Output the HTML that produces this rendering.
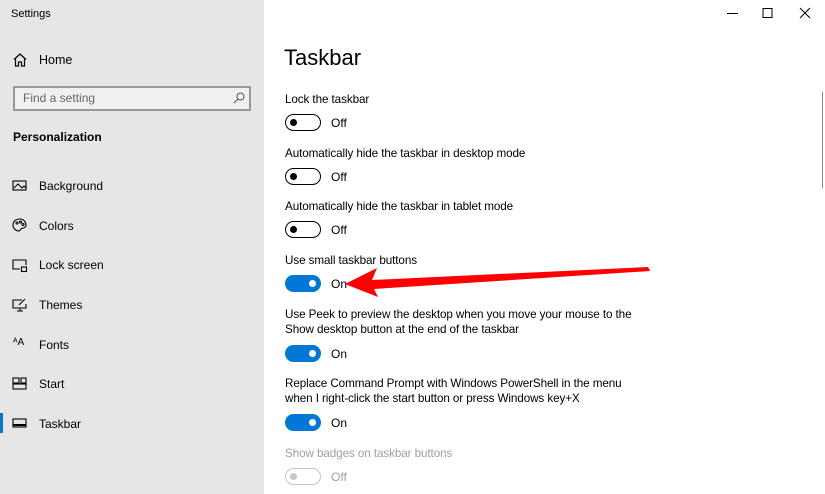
<!DOCTYPE html>
<html><head><style>
*{margin:0;padding:0;box-sizing:border-box}
body{width:825px;height:494px;overflow:hidden;background:#fff;font-family:"Liberation Sans",sans-serif;color:#000;position:relative}
.side{position:absolute;left:0;top:0;width:264px;height:494px;background:#e6e6e6}
.a{position:absolute;white-space:nowrap}
.nav{font-size:12px;left:39px}
.ic{position:absolute;left:12px}
.lbl{position:absolute;left:285px;font-size:11.7px;line-height:15px;letter-spacing:-0.1px}
.tg{position:absolute;left:285px;width:36px;height:17px;border-radius:9px}
.off{border:1.6px solid #000;background:#fff}
.off::after{content:"";position:absolute;left:4px;top:3.5px;width:7px;height:7px;border-radius:50%;background:#000}
.on{background:#0078d7}
.on::after{content:"";position:absolute;right:5px;top:5px;width:7px;height:7px;border-radius:50%;background:#fff}
.dis{border:1.6px solid #c6c6c6}
.dis::after{content:"";position:absolute;left:4px;top:3.5px;width:7px;height:7px;border-radius:50%;background:#c6c6c6}
.st{position:absolute;left:331px;font-size:12px}
</style></head><body>
<div class="side"></div>
<div class="a" style="left:11px;top:8px;font-size:11px">Settings</div>
<svg class="ic" style="top:53px" width="16" height="14" viewBox="0 0 16 14" fill="none" stroke="#000" stroke-width="1.2"><path d="M2 6.5L8 1l6 5.5M3.5 5.5V13h3V9h3v4h3V5.5"/></svg>
<div class="a nav" style="top:53px;font-size:12.5px">Home</div>
<div class="a" style="left:13px;top:86px;width:238px;height:25px;border:2px solid #999;background:#f0f0f0"></div>
<div class="a" style="left:23px;top:91px;font-size:12px;color:#666">Find a setting</div>
<svg class="a" style="left:233px;top:92px" width="12" height="12" viewBox="0 0 12 12" fill="none" stroke="#555" stroke-width="1"><circle cx="7.5" cy="4.5" r="3.5"/><path d="M5 7L1 11"/></svg>
<div class="a" style="left:13px;top:130px;font-size:12px;font-weight:bold">Personalization</div>

<svg class="ic" style="top:180px" width="16" height="12" fill="none" stroke="#000" stroke-width="1.1"><rect x="1" y="1" width="13" height="9"/><path d="M2 8l4-4 4 4 2-2 2 2"/></svg>
<div class="a nav" style="top:179px">Background</div>
<svg class="ic" style="top:218px" width="16" height="14" fill="none" stroke="#000" stroke-width="1.1"><path d="M8 1C4 1 1 3.5 1 7s3 6 6 6c1.5 0 1-2 2.5-2.5S14 10 14 7 11.5 1 8 1z"/><circle cx="5" cy="5" r="1"/><circle cx="8.5" cy="4" r="1"/><circle cx="11" cy="6.5" r="1"/></svg>
<div class="a nav" style="top:219px">Colors</div>
<svg class="ic" style="top:259px" width="16" height="14" fill="none" stroke="#000" stroke-width="1.1"><path d="M8 10H1V1h13v5"/><rect x="9.5" y="8" width="5" height="4.5"/></svg>
<div class="a nav" style="top:258px">Lock screen</div>
<svg class="ic" style="top:298px" width="16" height="14" fill="none" stroke="#000" stroke-width="1.1"><path d="M10 2H1v8h13V6M5 13h6M8 10v3M7 7l6-6"/></svg>
<div class="a nav" style="top:298px">Themes</div>
<div class="a" style="left:13px;top:337px;font-size:10px">ᴬA</div>
<div class="a nav" style="top:338px">Fonts</div>
<svg class="ic" style="top:377px" width="16" height="13" fill="none" stroke="#000" stroke-width="1.1"><rect x="1" y="1" width="6" height="5"/><rect x="9" y="1" width="5" height="5"/><rect x="1" y="7" width="13" height="5"/></svg>
<div class="a nav" style="top:377px">Start</div>
<div class="a" style="left:0;top:413px;width:3px;height:20px;background:#0078d7"></div>
<svg class="ic" style="top:418px" width="16" height="11" fill="none" stroke="#000" stroke-width="1.1"><rect x="1" y="1" width="13" height="8"/><path d="M1 7h13" stroke-width="2"/></svg>
<div class="a nav" style="top:417px">Taskbar</div>

<svg class="a" style="left:720px;top:6px" width="95" height="14" fill="none" stroke="#000" stroke-width="1"><path d="M7 7.5h11M43 2.5h9v9h-9zM80 2l10 10M90 2L80 12"/></svg>
<div class="a" style="left:822px;top:92px;width:1px;height:96px;background:#888"></div>

<div class="a" style="left:284px;top:45px;font-size:22px">Taskbar</div>
<div class="lbl" style="top:92px">Lock the taskbar</div>
<div class="tg off" style="top:114px"></div><div class="st" style="top:116px">Off</div>
<div class="lbl" style="top:146px">Automatically hide the taskbar in desktop mode</div>
<div class="tg off" style="top:168px"></div><div class="st" style="top:170px">Off</div>
<div class="lbl" style="top:199px">Automatically hide the taskbar in tablet mode</div>
<div class="tg off" style="top:221px"></div><div class="st" style="top:223px">Off</div>
<div class="lbl" style="top:253px">Use small taskbar buttons</div>
<div class="tg on" style="top:275px"></div><div class="st" style="top:277px">On</div>
<div class="lbl" style="top:307px">Use Peek to preview the desktop when you move your mouse to the<br>Show desktop button at the end of the taskbar</div>
<div class="tg on" style="top:345px"></div><div class="st" style="top:347px">On</div>
<div class="lbl" style="top:376px">Replace Command Prompt with Windows PowerShell in the menu<br>when I right-click the start button or press Windows key+X</div>
<div class="tg on" style="top:414px"></div><div class="st" style="top:416px">On</div>
<div class="lbl" style="top:446px;color:#a0a0a0">Show badges on taskbar buttons</div>
<div class="tg dis" style="top:468px"></div><div class="st" style="top:470px;color:#a0a0a0">Off</div>

<svg class="a" style="left:0;top:0" width="825" height="494"><polygon points="345,284 377,268 372,280 648,267 650,271 374,289 378,297" fill="#f00"/></svg>
</body></html>
